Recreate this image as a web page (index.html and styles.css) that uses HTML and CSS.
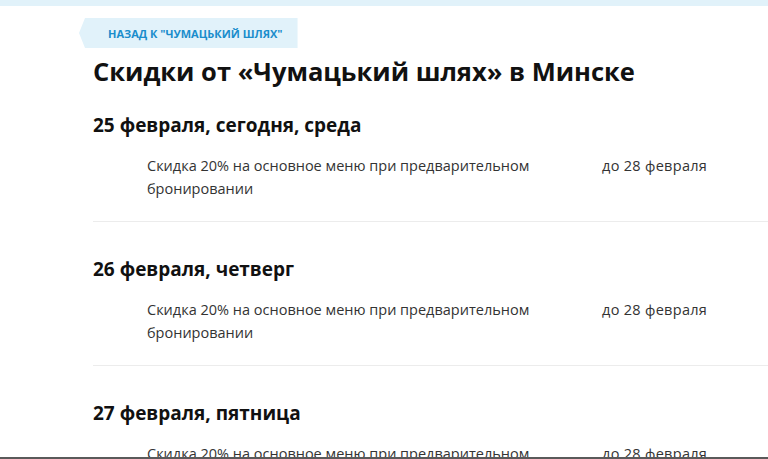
FILE: index.html
```html
<!DOCTYPE html>
<html lang="ru">
<head>
  <meta charset="UTF-8">
  <meta name="viewport" content="width=device-width, initial-scale=1.0">
  <title>Скидки от «Чумацький шлях» в Минске</title>
  <link rel="stylesheet" href="styles.css">
</head>
<body>
  <div class="topbar"></div>
  <main class="page">
    <a class="back" href="#">Назад к "Чумацький шлях"</a>
    <h1 class="title">Скидки от «Чумацький шлях» в Минске</h1>

    <section class="day">
      <h2 class="day-title">25 февраля, сегодня, среда</h2>
      <div class="offer">
        <div class="offer-text">Скидка 20% на основное меню при предварительном бронировании</div>
        <div class="offer-until">до 28 февраля</div>
      </div>
    </section>

    <section class="day">
      <h2 class="day-title">26 февраля, четверг</h2>
      <div class="offer">
        <div class="offer-text">Скидка 20% на основное меню при предварительном бронировании</div>
        <div class="offer-until">до 28 февраля</div>
      </div>
    </section>

    <section class="day">
      <h2 class="day-title">27 февраля, пятница</h2>
      <div class="offer">
        <div class="offer-text">Скидка 20% на основное меню при предварительном бронировании</div>
        <div class="offer-until">до 28 февраля</div>
      </div>
    </section>
  </main>
  <div class="window-edge"></div>
</body>
</html>
```

FILE: styles.css
```css
* { box-sizing: border-box; }
body { margin: 0; background: #fff; color: #111; font-family: "Open Sans", "Noto Sans", sans-serif; overflow: hidden; }
.topbar { height: 6px; background: #e1f2fa; }
.page { padding-left: 93px; }
.back { display: inline-flex; align-items: center; height: 30px; margin: 12px 0 0 -14px; padding: 0 15px 0 29px; background: #e1f2fa; color: #1a8dcc; font-size: 11px; font-weight: 700; text-transform: uppercase; text-decoration: none; clip-path: polygon(6px 0, 100% 0, 100% 100%, 6px 100%, 0 50%); }
.title { margin: 6px 0 0; font-size: 25.5px; line-height: 34px; font-weight: 700; color: #111; }
.day { border-bottom: 1px solid #ececec; padding: 25px 0 21px; }
.day + .day { padding-top: 35px; }
.day-title { margin: 0; font-size: 19px; line-height: 24px; font-weight: 700; }
.offer { display: flex; padding: 17px 0 0 54px; font-size: 14.5px; line-height: 23px; color: #333; }
.offer-text { width: 455px; padding-right: 40px; }
.offer-until { white-space: nowrap; letter-spacing: 0.3px; }
.window-edge { position: fixed; left: 0; right: 0; bottom: 0; height: 2px; background: #5a5a5a; }
```
